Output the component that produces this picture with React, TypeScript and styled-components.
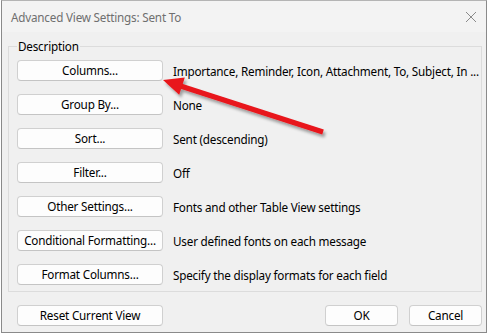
import React from "react";
import styled, { createGlobalStyle } from "styled-components";

const GlobalStyle = createGlobalStyle`
  html, body {
    margin: 0;
    padding: 0;
    background: #ffffff;
  }
  body {
    font-family: "Noto Sans", "Open Sans", sans-serif;
    font-size: 11.7px;
    letter-spacing: -0.2px;
    color: #000;
  }
`;

const Window = styled.div`
  position: relative;
  box-sizing: border-box;
  width: 486px;
  height: 333px;
  margin-left: 1px;
  background: #f0f0f0;
  border: 1px solid #8a8a8a;
  border-top-color: #b4b4b4;
  display: flex;
  flex-direction: column;
`;

const TitleBar = styled.div`
  height: 31px;
  flex: none;
  display: flex;
  align-items: center;
  justify-content: space-between;
  padding: 0 9px 0 9px;
  background: #f3f3f3;
`;

const Title = styled.span`
  color: #6f6f6f;
  font-size: 11.7px;
`;

const CloseIcon = styled.svg`
  display: block;
  width: 12px;
  height: 12px;
`;

const GroupBox = styled.fieldset`
  margin: 6px 4px 0 6px;
  padding: 6px 0 6px 8px;
  border: 1px solid #dcdcdc;
  border-radius: 0;
  min-width: 0;
`;

const Legend = styled.legend`
  padding: 0 1px;
  margin-left: 0;
  line-height: 16px;
  font-size: 11.7px;
  color: #000;
`;

const Rows = styled.div`
  display: grid;
  grid-template-columns: 146px 1fr;
  row-gap: 13px;
  column-gap: 10px;
  align-items: center;
`;

const Button = styled.button<{ $w?: number }>`
  box-sizing: border-box;
  width: ${(p) => p.$w ?? 146}px;
  height: 21px;
  padding: 0;
  background: #fdfdfd;
  border: 1px solid #d0d0d0;
  border-bottom-color: #c4c4c4;
  border-radius: 4px;
  font-family: inherit;
  font-size: 11.7px;
  letter-spacing: -0.2px;
  color: #000;
  line-height: 19px;
  white-space: nowrap;
`;

const Desc = styled.span`
  white-space: nowrap;
`;

const Footer = styled.div`
  display: flex;
  align-items: center;
  margin: 13px 4px 0 15px;
`;

const Spacer = styled.div`
  flex: 1;
`;

const FooterGap = styled.div`
  width: 11px;
`;

const ArrowLayer = styled.svg`
  position: absolute;
  left: 0;
  top: 0;
  width: 484px;
  height: 331px;
  pointer-events: none;
  overflow: visible;
`;

const rows: [string, string][] = [
  ["Columns...", "Importance, Reminder, Icon, Attachment, To, Subject, In ..."],
  ["Group By...", "None"],
  ["Sort...", "Sent (descending)"],
  ["Filter...", "Off"],
  ["Other Settings...", "Fonts and other Table View settings"],
  ["Conditional Formatting...", "User defined fonts on each message"],
  ["Format Columns...", "Specify the display formats for each field"],
];

function Arrow() {
  // page coords minus window padding-box origin (2,1)
  const tip = [161, 79];
  const c1 = [182.8, 76.6];
  const c2 = [177.2, 93.8];
  return (
    <ArrowLayer viewBox="0 0 484 331">
      <defs>
        <filter id="shadow" x="-20%" y="-50%" width="140%" height="200%">
          <feDropShadow dx="2" dy="3" stdDeviation="1.5" floodColor="#000" floodOpacity="0.35" />
        </filter>
      </defs>
      <g filter="url(#shadow)">
        <line x1="177" x2="321" y1="84.5" y2="131" stroke="#e8141a" strokeWidth="5" />
        <polygon points={`${tip.join(",")} ${c1.join(",")} ${c2.join(",")}`} fill="#e8141a" />
      </g>
    </ArrowLayer>
  );
}

export default function App() {
  return (
    <>
      <GlobalStyle />
      <Window>
        <TitleBar>
          <Title>Advanced View Settings: Sent To</Title>
          <CloseIcon viewBox="0 0 12 12">
            <path d="M1 1 L11 11 M11 1 L1 11" stroke="#8a8a8a" strokeWidth="1" fill="none" />
          </CloseIcon>
        </TitleBar>
        <GroupBox>
          <Legend>Description</Legend>
          <Rows>
            {rows.map(([label, desc]) => (
              <React.Fragment key={label}>
                <Button>{label}</Button>
                <Desc>{desc}</Desc>
              </React.Fragment>
            ))}
          </Rows>
        </GroupBox>
        <Footer>
          <Button>Reset Current View</Button>
          <Spacer />
          <Button $w={73}>OK</Button>
          <FooterGap />
          <Button $w={73}>Cancel</Button>
        </Footer>
        <Arrow />
      </Window>
    </>
  );
}
